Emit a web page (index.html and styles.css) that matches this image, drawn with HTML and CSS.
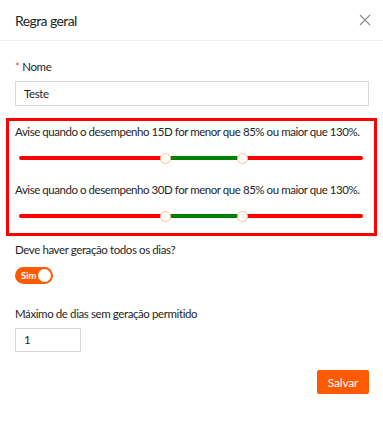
FILE: index.html
```html
<!DOCTYPE html>
<html>
<head>
<meta charset="utf-8">
<link rel="stylesheet" href="styles.css">
</head>
<body>
<div class="modal">
  <div class="header">
    <span class="title">Regra geral</span>
    <svg class="close" width="12" height="12" viewBox="0 0 12 12"><path d="M1 1 L11 11 M11 1 L1 11" stroke="#8c8c8c" stroke-width="1.1" fill="none"/></svg>
  </div>
  <div class="body">
    <div class="label"><span class="req">*</span>Nome</div>
    <div class="input wide">Teste</div>
    <div class="box">
      <div class="text">Avise quando o desempenho 15D for menor que 85% ou maior que 130%.</div>
      <div class="slider">
        <div class="rail"></div>
        <div class="range" style="left:42.5%;width:22.5%"></div>
        <div class="handle" style="left:42.5%"></div>
        <div class="handle" style="left:65%"></div>
      </div>
      <div class="text second">Avise quando o desempenho 30D for menor que 85% ou maior que 130%.</div>
      <div class="slider">
        <div class="rail"></div>
        <div class="range" style="left:42.5%;width:22.5%"></div>
        <div class="handle" style="left:42.5%"></div>
        <div class="handle" style="left:65%"></div>
      </div>
    </div>
    <div class="label q">Deve haver geração todos os dias?</div>
    <div class="switch"><span class="sw-text">Sim</span><span class="knob"></span></div>
    <div class="label max">Máximo de dias sem geração permitido</div>
    <div class="input small">1</div>
    <div class="footer"><button class="btn">Salvar</button></div>
  </div>
</div>
</body>
</html>
```
FILE: styles.css
```css
* { box-sizing: border-box; }
html, body { margin: 0; padding: 0; background: #fff; }
body {
  font-family: Lato, "Noto Sans", sans-serif;
  font-size: 11.5px;
  letter-spacing: -0.4px;
  color: #262626;
  width: 383px;
}
.header {
  height: 41px;
  padding: 0 12px 0 15px;
  display: flex;
  align-items: center;
  justify-content: space-between;
  border-bottom: 1px solid #f0f0f0;
}
.title { font-size: 14px; letter-spacing: -0.6px; color: #1f1f1f; }
.close { display: block; }
.body { padding: 17px 14px 0 15px; }
.label { line-height: 18px; height: 18px; color: #262626; }
.req { color: #ff4d4f; margin-right: 3px; font-size: 11px; }
.input {
  border: 1px solid #d9d9d9;
  height: 25px;
  line-height: 23px;
  padding: 0 8px;
  color: #262626;
  margin-top: 5px;
}
.input.wide { width: 354px; }
.input.small { width: 66px; height: 24px; line-height: 22px; }
.box {
  border: 3px solid #ff0000;
  margin: 12px -8px 0 -9px;
  padding: 2px 6px 11px 6px;
}
.text { line-height: 18px; white-space: nowrap; letter-spacing: -0.45px; }
.text.second { margin-top: 17px; }
.slider {
  position: relative;
  height: 12px;
  margin: 11px 5px 0 4px;
}
.rail {
  position: absolute;
  left: 0; right: 0;
  top: 4px;
  height: 4px;
  background: #ff0000;
  border-radius: 2px;
}
.range {
  position: absolute;
  top: 4px;
  height: 4px;
  background: #008000;
}
.handle {
  position: absolute;
  top: 0.5px;
  width: 11px;
  height: 11px;
  margin-left: -5.5px;
  border-radius: 50%;
  background: #fff;
  border: 1.5px solid #ffbf94;
}
.label.q { margin-top: 5px; }
.switch {
  margin-top: 8px;
  width: 38px;
  height: 17px;
  border-radius: 9px;
  background: #ff5a00;
  display: flex;
  align-items: center;
  justify-content: space-between;
  padding: 0 2px 0 6px;
}
.sw-text { color: #fff; font-size: 9.5px; font-weight: 700; line-height: 17px; letter-spacing: 0; }
.knob { width: 13px; height: 13px; border-radius: 50%; background: #fff; }
.label.max { margin-top: 21px; }
.footer { display: flex; justify-content: flex-end; margin-top: 18px; }
.btn {
  font-family: inherit;
  letter-spacing: -0.2px;
  width: 52px;
  height: 24px;
  border: none;
  background: #ff5a00;
  color: #fff;
  font-size: 12px;
  padding: 0;
  border-radius: 2px;
}
```
